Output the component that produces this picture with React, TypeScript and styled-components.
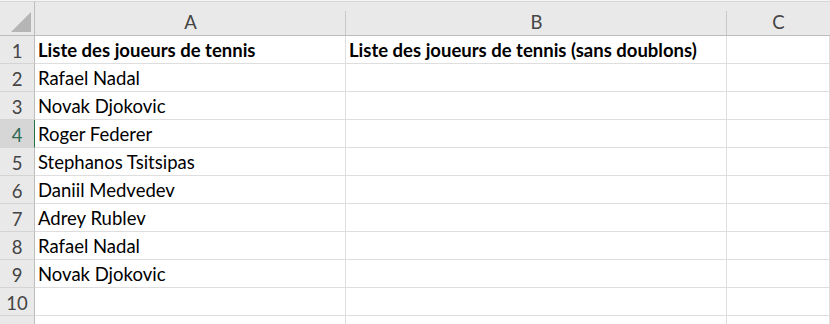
import React from "react";
import styled, { createGlobalStyle } from "styled-components";

const Global = createGlobalStyle`
  html, body { margin: 0; padding: 0; background: #ffffff; }
  body { font-family: Lato, "Open Sans", sans-serif; }
`;

const Sheet = styled.div`
  width: 830px;
  height: 324px;
  overflow: hidden;
  display: grid;
  grid-template-columns: 35px 311px 381px 103px;
  grid-auto-rows: 28px;
  grid-template-rows: 35px;
  border-top: 1px solid #f4f4f4;
  box-sizing: border-box;
  font-size: 18.5px;
  color: #000;
`;

const Corner = styled.div`
  position: relative;
  background: #e9e9e9;
  border-right: 1px solid #bdbdbd;
  border-bottom: 1px solid #bdbdbd;
  border-top: 1px solid #d6d6d6;
  &::after {
    content: "";
    position: absolute;
    right: 3px;
    bottom: 3px;
    width: 0;
    height: 0;
    border-left: 20px solid transparent;
    border-bottom: 20px solid #b5b5b5;
  }
`;

const ColHead = styled.div<{ $last?: boolean }>`
  position: relative;
  background: #e9e9e9;
  border-top: 1px solid #d6d6d6;
  border-bottom: 1px solid #bdbdbd;
  display: flex;
  align-items: flex-end;
  justify-content: center;
  padding-bottom: 2px;
  color: #444;
  &::after {
    content: "";
    display: ${(p) => (p.$last ? "none" : "block")};
    position: absolute;
    right: 0;
    top: 9px;
    bottom: 0;
    width: 1px;
    background: #c8c8c8;
  }
`;

const RowHead = styled.div<{ $active?: boolean }>`
  background: ${(p) => (p.$active ? "#d6d6d6" : "#e9e9e9")};
  border-right: 1px solid ${(p) => (p.$active ? "#217346" : "#bdbdbd")};
  border-bottom: 1px solid #d4d4d4;
  display: flex;
  align-items: flex-end;
  justify-content: center;
  padding-bottom: 1px;
  color: ${(p) => (p.$active ? "#2f6a53" : "#444")};
`;

const Cell = styled.div<{ $bold?: boolean }>`
  border-right: 1px solid #dedede;
  border-bottom: 1px solid #dedede;
  display: flex;
  align-items: flex-end;
  padding: 0 0 2px 3px;
  font-weight: ${(p) => (p.$bold ? 700 : 400)};
  white-space: nowrap;
  overflow: visible;
`;

const rows: [string, string][] = [
  ["Liste des joueurs de tennis", "Liste des joueurs de tennis (sans doublons)"],
  ["Rafael Nadal", ""],
  ["Novak Djokovic", ""],
  ["Roger Federer", ""],
  ["Stephanos Tsitsipas", ""],
  ["Daniil Medvedev", ""],
  ["Adrey Rublev", ""],
  ["Rafael Nadal", ""],
  ["Novak Djokovic", ""],
  ["", ""],
  ["", ""],
];

export default function App() {
  return (
    <>
      <Global />
      <Sheet>
        <Corner />
        <ColHead>A</ColHead>
        <ColHead>B</ColHead>
        <ColHead $last>C</ColHead>
        {rows.map(([a, b], i) => (
          <React.Fragment key={i}>
            <RowHead $active={i === 3}>{i + 1}</RowHead>
            <Cell $bold={i === 0}>{a}</Cell>
            <Cell $bold={i === 0}>{b}</Cell>
            <Cell />
          </React.Fragment>
        ))}
      </Sheet>
    </>
  );
}
